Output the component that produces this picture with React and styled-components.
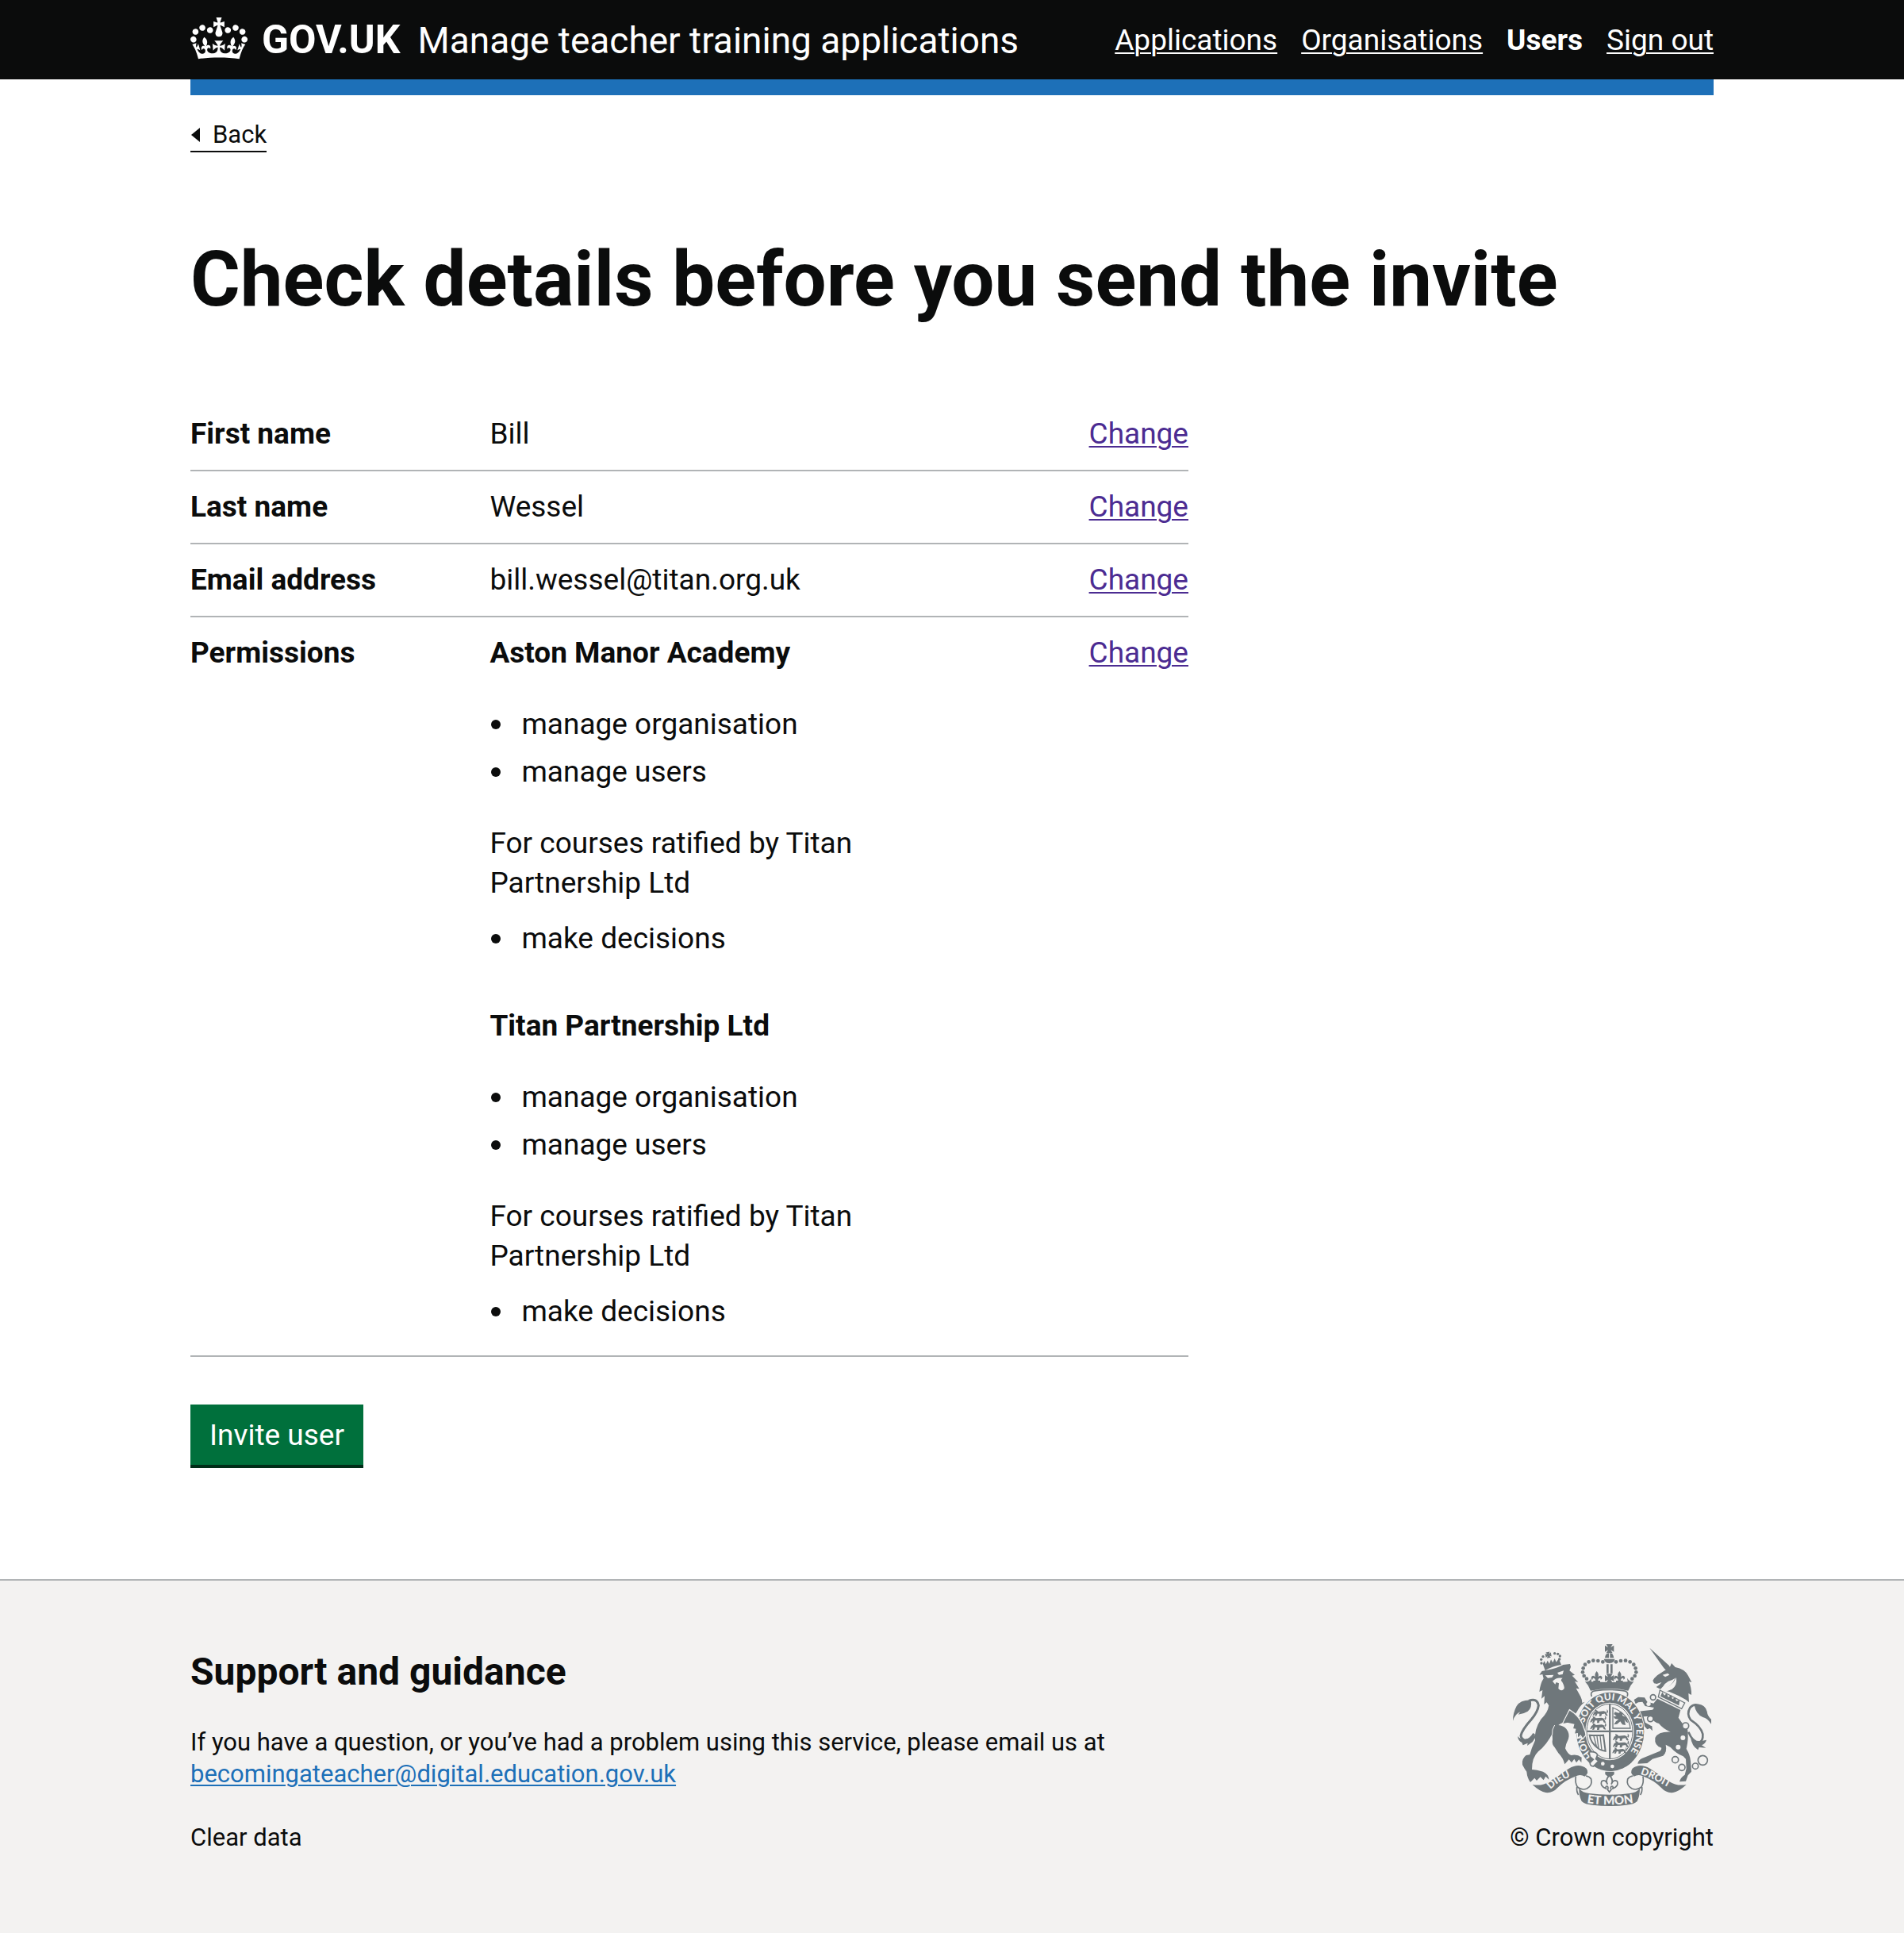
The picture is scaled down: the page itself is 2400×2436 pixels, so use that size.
import React from "react";
import styled, { createGlobalStyle, css } from "styled-components";

const ink = "#0b0c0c";
const rule = "#b1b4b6";
const blue = "#1d70b8";
const paper = "#f3f2f1";
const crestGrey = "#6f777b";

const GlobalStyle = createGlobalStyle`
  *, *::before, *::after { box-sizing: border-box; }
  body {
    margin: 0;
    background: #ffffff;
    color: ${ink};
    font-family: Roboto, "Liberation Sans", sans-serif;
    font-size: 37px;
    line-height: 50px;
  }
`;

const Page = styled.div`
  min-height: 100vh;
  display: flex;
  flex-direction: column;
`;

const Container = styled.div`
  max-width: 1920px;
  width: calc(100% - 60px);
  margin: 0 auto;
`;

const linkStyle = css`
  text-decoration: underline;
  text-decoration-thickness: 2px;
  text-underline-offset: 3px;
`;

const Header = styled.header`
  background: ${ink};
`;

const HeaderRow = styled(Container)`
  min-height: 100px;
  display: flex;
  flex-wrap: wrap;
  align-items: center;
  justify-content: space-between;
`;

const Brand = styled.a`
  display: flex;
  align-items: center;
  gap: 18px;
  color: #ffffff;
  text-decoration: none;
  line-height: 60px;
`;

const BrandText = styled.span`
  display: flex;
  align-items: baseline;
  gap: 22px;
`;

const Logotype = styled.span`
  font-size: 50px;
  font-weight: 700;
`;

const ServiceName = styled.span`
  font-size: 46px;
`;

const Nav = styled.nav`
  display: flex;
  gap: 30px;
  padding-top: 2px;
`;

const NavLink = styled.a`
  color: #ffffff;
  ${({ $current }) => ($current ? "font-weight: 700; text-decoration: none;" : linkStyle)}
`;

const ServiceBar = styled(Container)`
  height: 20px;
  background: ${blue};
`;

const BackLink = styled.a`
  display: flex;
  width: fit-content;
  align-items: center;
  gap: 16px;
  margin-top: 30px;
  border-bottom: 2px solid ${ink};
  color: ${ink};
  font-size: 31px;
  line-height: 40px;
  text-decoration: none;
`;

const Main = styled.main`
  display: flex;
  flex-direction: column;
  align-items: flex-start;
  padding: 110px 0 140px;
`;

const Title = styled.h1`
  margin: 0 0 100px;
  font-size: 96px;
  line-height: 100px;
  font-weight: 700;
`;

const SummaryList = styled.dl`
  width: 100%;
  max-width: 1258px;
  margin: 0 0 60px;
`;

const SummaryRow = styled.div`
  display: grid;
  grid-template-columns: 30% 50% 20%;
  padding: 20px 0;
  border-bottom: 2px solid ${rule};
`;

const Term = styled.dt`
  font-weight: 700;
`;

const Value = styled.dd`
  margin: 0;
  padding-right: 40px;
`;

const Action = styled.dd`
  margin: 0;
  text-align: right;
`;

const ChangeLink = styled.a`
  color: #4c2c92;
  ${linkStyle}
`;

const Organisation = styled.section`
  & + & {
    margin-top: 60px;
  }
`;

const OrganisationName = styled.h2`
  margin: 0 0 40px;
  font-size: 37px;
  line-height: 50px;
  font-weight: 700;
`;

const Bullets = styled.ul`
  display: grid;
  gap: 10px;
  margin: 0;
  padding: 0;
  list-style: none;
`;

const Bullet = styled.li`
  display: flex;
  align-items: center;
  gap: 26px;

  &::before {
    content: "";
    width: 12px;
    height: 12px;
    margin-left: 2px;
    border-radius: 50%;
    background: ${ink};
  }
`;

const Ratified = styled.p`
  margin: 40px 0 20px;
`;

const Permission = styled.div`
  padding-bottom: 10px;
`;

const SubmitButton = styled.button`
  padding: 14px 24px 12px;
  margin-bottom: 4px;
  border: 0;
  background: #00703c;
  box-shadow: 0 4px 0 #002d18;
  color: #ffffff;
  font: inherit;
  cursor: pointer;
`;

const Footer = styled.footer`
  flex: 1;
  padding: 80px 0 100px;
  border-top: 2px solid ${rule};
  background: ${paper};
  font-size: 31px;
  line-height: 40px;
`;

const FooterRow = styled(Container)`
  display: flex;
  flex-wrap: wrap;
  align-items: flex-end;
  justify-content: space-between;
`;

const FooterTitle = styled.h2`
  margin: 0 0 35px;
  font-size: 48px;
  line-height: 68px;
  font-weight: 700;
`;

const FooterText = styled.p`
  margin: 0 0 40px;
`;

const FooterLink = styled.a`
  color: ${({ $plain }) => ($plain ? ink : blue)};
  ${({ $plain }) => ($plain ? "text-decoration: none;" : linkStyle)}
`;

const Copyright = styled.a`
  display: flex;
  flex-direction: column;
  align-items: center;
  gap: 20px;
  color: ${ink};
  text-decoration: none;
`;

const Crown = () => (
  <svg width="72" height="57" viewBox="0 0 132 104.5" fill="currentColor" aria-hidden="true">
    <path d="M25 30.2c3.5 1.5 7.7-.2 9.1-3.7 1.5-3.6-.2-7.8-3.9-9.2-3.6-1.4-7.6.3-9.1 3.9-1.4 3.5.3 7.5 3.9 9zM9 39.5c3.6 1.5 7.8-.2 9.2-3.7 1.5-3.6-.2-7.8-3.9-9.1-3.6-1.5-7.6.2-9.1 3.8-1.4 3.5.3 7.5 3.8 9zM4.4 57.2c3.5 1.5 7.7-.2 9.1-3.8 1.5-3.6-.2-7.7-3.9-9.1-3.5-1.5-7.6.3-9.1 3.8-1.4 3.5.3 7.6 3.9 9.1zm38.3-21.4c3.5 1.5 7.7-.2 9.1-3.8 1.5-3.6-.2-7.7-3.9-9.1-3.6-1.5-7.6.3-9.1 3.8-1.3 3.6.4 7.7 3.9 9.1zm64.4-5.6c-3.6 1.5-7.8-.2-9.1-3.7-1.5-3.6.2-7.8 3.8-9.2 3.6-1.4 7.7.3 9.2 3.9 1.3 3.5-.4 7.5-3.9 9zm15.9 9.3c-3.6 1.5-7.7-.2-9.1-3.7-1.5-3.6.2-7.8 3.7-9.1 3.6-1.5 7.7.2 9.2 3.8 1.5 3.5-.3 7.5-3.8 9zm4.7 17.7c-3.6 1.5-7.8-.2-9.2-3.8-1.5-3.6.2-7.7 3.9-9.1 3.6-1.5 7.7.3 9.2 3.8 1.3 3.5-.4 7.6-3.9 9.1zM89.3 35.8c-3.6 1.5-7.8-.2-9.2-3.8-1.4-3.6.2-7.7 3.9-9.1 3.6-1.5 7.7.3 9.2 3.8 1.4 3.6-.3 7.7-3.9 9.1zM69.7 17.7l8.9 4.7V9.3l-8.9 2.8c-.2-.3-.5-.6-.9-.9L72.4 0H59.6l3.5 11.2c-.3.3-.6.5-.9.9l-8.8-2.8v13.1l8.8-4.7c.3.3.6.7.9.9l-5 15.4v.1c-.2.8-.4 1.6-.4 2.4 0 4.1 3.1 7.5 7 8.1h.2c.3 0 .7.1 1 .1.4 0 .7 0 1-.1h.2c4-.6 7.1-4.1 7.1-8.1 0-.8-.1-1.7-.4-2.4V34l-5.1-15.4c.4-.2.7-.6 1-.9zM66 92.8c16.9 0 32.8 1.1 47.1 3.2 4-16.9 8.9-26.7 14-33.5l-9.6-3.4c1 4.9 1.1 7.2 0 10.2-1.5-1.4-3-4.3-4.2-8.7L108.6 76c2.8-2 5-3.2 7.5-3.3-4.4 9.4-10 11.9-13.6 11.2-4.3-.8-6.3-4.6-5.6-7.9 1-4.7 5.7-5.9 8-.5 4.3-8.7-3-11.4-7.6-8.8 7.1-7.2 7.9-13.5 2.1-21.1-8 6.1-8.1 12.3-4.5 20.8-4.7-5.4-12.1-2.5-9.5 6.2 3.4-5.2 7.9-2 7.2 3.1-.6 4.3-6.4 7.8-13.5 7.2-10.3-.9-10.9-8-11.2-13.8 2.5-.5 7.1 1.8 11 7.3L80.2 60c-4.1 4.4-8 5.3-12.3 5.4 1.4-4.4 8-11.6 8-11.6H55.5s6.4 7.2 7.9 11.6c-4.2-.1-8-1-12.3-5.4l1.4 16.4c3.9-5.5 8.5-7.7 10.9-7.3-.3 5.8-.9 12.8-11.1 13.8-7.2.6-12.9-2.9-13.5-7.2-.7-5 3.8-8.3 7.1-3.1 2.7-8.7-4.6-11.6-9.4-6.2 3.7-8.5 3.6-14.7-4.6-20.8-5.8 7.6-5 13.9 2.2 21.1-4.7-2.6-11.9.1-7.7 8.8 2.3-5.5 7.1-4.2 8.1.5.7 3.3-1.3 7.1-5.7 7.9-3.5.7-9-1.8-13.5-11.2 2.5.1 4.7 1.3 7.5 3.3l-4.7-15.4c-1.2 4.4-2.7 7.2-4.3 8.7-1.1-3-.9-5.3 0-10.2l-9.5 3.4c5 6.9 9.9 16.7 14 33.5 14.8-2.1 30.8-3.2 47.7-3.2z" />
  </svg>
);

const BackArrow = () => (
  <svg width="12" height="20" viewBox="0 0 12 20" aria-hidden="true">
    <path d="M12 1v18L1 10z" fill="currentColor" />
  </svg>
);

const crownBeads = [
  [412, 133], [394, 129], [376, 128], [359, 133], [345, 143], [338, 157], [336, 172], [341, 186], [351, 197],
];

const lionBeads = [
  [180, 138], [179, 124], [186, 113], [230, 101], [242, 103], [250, 111], [248, 123],
];

const chainLinks = [
  [602, 267, 10], [592, 348, 11], [725, 375, 12], [686, 503, 12], [711, 532, 12], [762, 527, 11], [790, 505, 18],
];

const pattee = "M-12-17h24L5-5 17-12v24L5 5l7 12h-24L-5 5l-12 7v-24L-5-5z";
const fleur = "M0-24q10 12 5 22q8-9 14-2q5 8-4 12q2-7-5-5q-5 2-5 9h8v6h-26v-6h8q0-7-5-9q-7-2-5 5q-9-4-4-12q6-7 14 2q-5-10 5-22z";
const passant =
  "M2 16l5-12 6-4-2-7 8 3 5 5 22-2q10 2 11 9l5 10-8-1-4-8-12 2-2 8h-8l1-9-8-1-4 9-7 1 3-9-8 7z M56 2q6-4 0-10q12 3 4 16z";

const RibbonSide = () => (
  <g>
    <path
      d="M146 597Q182 604 212 584L284 536Q322 514 350 536Q362 552 344 566Q326 556 308 566Q268 580 240 610Q222 630 196 627Q172 622 146 597z"
      fill={crestGrey}
    />
    <path
      d="M310 566Q306 590 316 606Q332 620 352 612Q374 600 368 576Q362 566 348 564M320 636Q312 624 314 606"
      fill="none"
      stroke={crestGrey}
      strokeWidth="5"
    />
  </g>
);

const RoyalArms = () => (
  <svg width="250" height="204" viewBox="72 66 750 612" fill={crestGrey} aria-hidden="true">
    <defs>
      <path id="garter-line" d="M374 487A100 119 0 1 1 480 505" />
      <path id="dieu-line" d="M214 615Q250 578 318 557" />
      <path id="mon-line" d="M352 666Q438 680 526 666" />
      <path id="droit-line" d="M554 558Q602 572 668 613" />
    </defs>

    {/* lion's crown */}
    {lionBeads.map(([x, y]) => <circle key={`${x}-${y}`} cx={x} cy={y} r="5" />)}
    <path d="M185 140l6-10 6 12 6-14 7 12 6-16 7 12 7-16 6 14 10-14 4 12 5 12q-32 4-61 22z" />
    <path d={pattee} transform="translate(206 107) rotate(-12) scale(.65)" />

    {/* lion */}
    <path d="M172 182L182 168L200 164Q238 158 262 144L288 141L291 152L286 166L306 182L296 185L319 209L306 207L323 235L311 233L328 264Q334 276 334 288L344 284Q324 300 314 322L300 340L284 360Q262 358 244 372Q262 374 274 386Q288 404 282 424Q272 444 270 460Q278 480 292 486Q314 480 332 494L331 514L322 502L312 514L304 500L294 514L284 502L268 520Q262 496 244 478L230 456Q218 444 222 426L221 404Q200 446 168 472Q144 494 144 540Q162 540 186 548Q208 558 208 578L196 566L188 580L176 568L162 582L154 572L138 588Q126 572 124 548Q116 538 108 522Q104 500 122 486L136 484Q142 460 156 430Q152 388 178 350Q204 326 208 298L200 286L190 294L192 262L180 272L184 240L172 246Q176 214 188 196L184 180z" />
    <path d="M194 184l32-2-6 10-16 2zM240 174l24-8-4 14-14 2z" fill={paper} />
    <path d="M222 206q14-16 38-12-10 8-2 14 10 18 8 26-10 14-22 0l2-20-10-4-4 8z" fill={paper} />
    <path d="M221 408Q218 390 230 372" fill="none" stroke={paper} strokeWidth="3" />

    {/* lion's tail */}
    <path
      d="M132 280Q164 268 169 298Q166 322 142 350Q106 390 102 412Q104 426 118 430Q138 428 152 404"
      fill="none"
      stroke={crestGrey}
      strokeWidth="9"
    />
    <path d="M72 356Q72 326 86 300Q102 276 140 278Q146 306 128 320Q112 330 92 332L100 322Q80 330 72 356z" />
    <path d="M90 414Q104 430 126 424Q146 420 156 408L158 418L146 436L126 450L128 440L110 448L106 438Q92 432 90 414z" />

    {/* royal crown */}
    <path d={pattee} transform="translate(437 83)" />
    <path d="M420 118q2-18 15-18v18zM454 118q-2-18-15-18v18zM416 122h42q-4 16-21 16t-21-16zM426 142h8v34h-8zM441 142h8v34h-8z" />
    {crownBeads.map(([x, y]) => (
      <g key={`${x}-${y}`}>
        <circle cx={x} cy={y} r="7" />
        <circle cx={874 - x} cy={y} r="7" />
      </g>
    ))}
    <path d={pattee} transform="translate(437 195)" />
    <path d={fleur} transform="translate(389 192)" />
    <path d={fleur} transform="translate(475 192)" />
    <path d="M344 206q14 6 26-12l-2 14q34 2 69 2t69-2l-2-14q12 18 26 12-14 14-22 36-71-16-142 0-8-22-22-36z" />
    <path d="M370 264Q362 244 386 242Q437 234 488 242Q512 244 504 264" fill="none" stroke={crestGrey} strokeWidth="5" />

    {/* unicorn */}
    <path d="M589 80L640 152Q650 168 662 164Q672 158 662 146z" />
    <path d="M648 164L664 156L672 138L686 153Q722 160 734 184L748 210L738 208Q748 232 747 258L736 252L738 286L726 276L700 262L664 246L640 240Q672 226 686 194Q672 204 660 206Q646 214 640 226L630 236L614 228L626 220L634 210L616 216L606 214L601 204Q606 194 618 184z" />
    <path d="M638 182l20-6 6 6-16 8z" fill={paper} />
    <path d="M632 238Q672 230 690 192Q694 222 674 236Q656 246 634 244z" fill={paper} />
    <path d="M628 240L722 288L710 310L622 266z" fill={paper} stroke={crestGrey} strokeWidth="4" />
    <path d="M630 263l7-16 8 13 9-9 5 16 12-9 4 16 11-7 4 14 13-4-3 21z" />
    <path d="M618 272L706 315L698 344Q712 368 732 384Q738 420 728 462Q742 484 744 508L747 548L734 562L726 584L702 586Q706 570 722 560L728 536L726 500L716 490Q690 480 668 456L650 446Q656 474 640 488L600 500L580 516L544 518Q546 504 560 498L628 470Q634 466 634 458Q606 450 610 420Q622 396 668 398Q640 386 624 366Q602 360 592 338L566 340L572 362Q590 372 598 376L600 394L590 384L580 388L560 366Q560 346 546 334L550 320L566 318L600 314L606 306L572 300L562 284L546 286L536 292L530 276L546 266L570 268L580 284L604 290z" />
    <circle cx="715" cy="420" r="9" fill={paper} />
    <circle cx="697" cy="455" r="9" fill={paper} />
    <circle cx="585" cy="292" r="8" fill={paper} />
    {chainLinks.map(([x, y, r]) => (
      <circle key={`${x}-${y}`} cx={x} cy={y} r={r} fill={paper} stroke={crestGrey} strokeWidth="5" />
    ))}

    {/* unicorn's tail */}
    <path
      d="M790 304Q760 286 742 306Q728 330 744 352Q784 378 790 406Q792 432 776 438Q752 436 736 398"
      fill="none"
      stroke={crestGrey}
      strokeWidth="8"
    />
    <path d="M758 296Q796 286 806 320Q808 338 822 350V368Q808 346 790 342Q764 330 758 296zM744 418Q760 440 804 428Q800 442 786 448L802 458L776 456L772 466Q748 452 744 418z" />

    {/* garter */}
    <ellipse cx="440" cy="397" rx="131" ry="152" fill={paper} />
    <ellipse cx="440" cy="397" rx="128" ry="149" />
    <ellipse cx="438" cy="396" rx="92" ry="109" fill={paper} />
    <ellipse cx="438" cy="396" rx="87" ry="104" fill="none" stroke={crestGrey} strokeWidth="3" />
    <g fill={paper} fontFamily="Lato, sans-serif" fontSize="36" fontWeight="900">
      <text><textPath href="#garter-line">HON</textPath></text>
      <text><textPath href="#garter-line" startOffset="132">SOIT QUI MAL Y PENSE</textPath></text>
    </g>
    <path d="M370 484Q430 524 496 506L522 512Q470 560 376 522z" />
    <path d="M360 474Q384 470 392 484L386 500L396 508L376 528Q362 526 364 514L376 502L364 492z" fill={paper} stroke={crestGrey} strokeWidth="5" />
    <circle cx="412" cy="518" r="7" fill={paper} />
    <circle cx="448" cy="528" r="7" fill={paper} />

    {/* lion's foreleg, over the garter */}
    <path
      d="M286 314Q322 336 336 370L346 398L348 410L336 424L328 412L316 422L316 404L304 406L308 388L298 386L302 370L284 366L262 362z"
      stroke={paper}
      strokeWidth="4"
    />
    <path d="M284 322L262 366L280 362L292 330z" />

    {/* shield */}
    <path d="M435 293h7v206h-7zM352 392h172v7H352z" />
    <path d={passant} transform="translate(372 320) scale(.95)" />
    <path d={passant} transform="translate(362 345)" />
    <path d={passant} transform="translate(362 371)" />
    <path d={passant} transform="translate(448 412)" />
    <path d={passant} transform="translate(448 438)" />
    <path d={passant} transform="translate(446 463) scale(.9)" />
    <path d="M450 306v78h66q-4-52-66-78z" fill="none" stroke={crestGrey} strokeWidth="4" />
    <path d="M458 322l14 4 8-6 8 8-2 8 14 6 8 22-8-4-6-8 4 20-12-2-8-12-12 10-12 2 8-12 10-8-14-2-6-8 12-2-10-8z" />
    <path d="M362 410q26 2 52 0l8 60q-20-2-30-12-26-20-30-48z" fill="none" stroke={crestGrey} strokeWidth="6" />
    <path d="M378 414l10 38M390 414l6 46M402 414l6 52" fill="none" stroke={crestGrey} strokeWidth="4" />

    {/* pendant fleur-de-lis */}
    <path d="M421 548h34v10l-10 8h-14l-10-8z" />
    <path
      d="M437 562Q454 578 444 596Q452 576 466 584Q474 602 450 612Q452 600 444 604Q440 610 444 616L437 625L430 616Q434 610 430 604Q422 600 424 612Q400 602 408 584Q422 576 430 596Q420 578 437 562z"
      fill={paper}
      stroke={crestGrey}
      strokeWidth="5"
    />

    {/* motto ribbon */}
    <RibbonSide />
    <g transform="translate(874 0) scale(-1 1)">
      <RibbonSide />
    </g>
    <path d="M322 612Q336 628 360 630Q438 640 514 630Q538 628 552 612Q552 640 542 660Q530 672 500 674Q438 682 374 674Q344 672 332 660Q322 640 322 612z" />
    <g fill={paper} fontFamily="Lato, sans-serif" fontWeight="900">
      <text fontSize="38"><textPath href="#dieu-line">DIEU</textPath></text>
      <text fontSize="45"><textPath href="#mon-line">ET MON</textPath></text>
      <text fontSize="38"><textPath href="#droit-line">DROIT</textPath></text>
    </g>
  </svg>
);

const navigation = [
  { label: "Applications" },
  { label: "Organisations" },
  { label: "Users", current: true },
  { label: "Sign out" },
];

const organisations = ["Aston Manor Academy", "Titan Partnership Ltd"];

const Permissions = () => (
  <Permission>
    {organisations.map((name) => (
      <Organisation key={name}>
        <OrganisationName>{name}</OrganisationName>
        <Bullets>
          <Bullet>manage organisation</Bullet>
          <Bullet>manage users</Bullet>
        </Bullets>
        <Ratified>For courses ratified by Titan Partnership Ltd</Ratified>
        <Bullets>
          <Bullet>make decisions</Bullet>
        </Bullets>
      </Organisation>
    ))}
  </Permission>
);

const details = [
  { term: "First name", value: "Bill" },
  { term: "Last name", value: "Wessel" },
  { term: "Email address", value: "bill.wessel@titan.org.uk" },
  { term: "Permissions", value: <Permissions /> },
];

export default function App() {
  return (
    <Page>
      <GlobalStyle />
      <Header>
        <HeaderRow>
          <Brand href="#">
            <Crown />
            <BrandText>
              <Logotype>GOV.UK</Logotype>
              <ServiceName>Manage teacher training applications</ServiceName>
            </BrandText>
          </Brand>
          <Nav>
            {navigation.map(({ label, current }) => (
              <NavLink key={label} href="#" $current={current} aria-current={current ? "page" : undefined}>
                {label}
              </NavLink>
            ))}
          </Nav>
        </HeaderRow>
      </Header>
      <ServiceBar />
      <Container>
        <BackLink href="#">
          <BackArrow />
          Back
        </BackLink>
        <Main>
          <Title>Check details before you send the invite</Title>
          <SummaryList>
            {details.map(({ term, value }) => (
              <SummaryRow key={term}>
                <Term>{term}</Term>
                <Value>{value}</Value>
                <Action>
                  <ChangeLink href="#">Change</ChangeLink>
                </Action>
              </SummaryRow>
            ))}
          </SummaryList>
          <SubmitButton type="submit">Invite user</SubmitButton>
        </Main>
      </Container>
      <Footer>
        <FooterRow>
          <div>
            <FooterTitle>Support and guidance</FooterTitle>
            <FooterText>
              If you have a question, or you’ve had a problem using this service, please email us at
              <br />
              <FooterLink href="mailto:becomingateacher@digital.education.gov.uk">
                becomingateacher@digital.education.gov.uk
              </FooterLink>
            </FooterText>
            <FooterLink href="#" $plain>
              Clear data
            </FooterLink>
          </div>
          <Copyright href="#">
            <RoyalArms />
            <span>© Crown copyright</span>
          </Copyright>
        </FooterRow>
      </Footer>
    </Page>
  );
}
